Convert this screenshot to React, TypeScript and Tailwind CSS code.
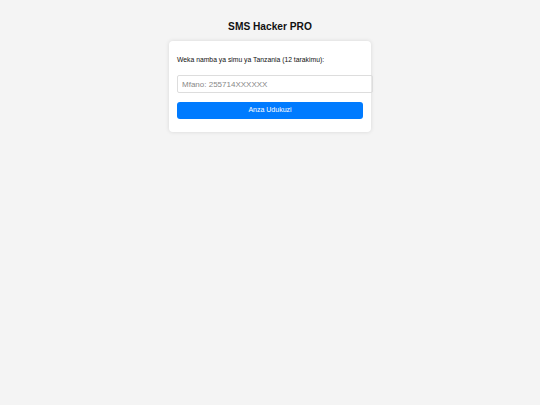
export default function App() {
  return (
    <div className="min-h-[405px] w-full bg-[#f4f4f4] pt-[20px]" style={{ fontFamily: '"Liberation Sans", Arial, sans-serif' }}>
      <h1 className="text-center text-[10.2px] font-bold leading-[14px] text-[#111]">SMS Hacker PRO</h1>
      <div className="mx-auto mt-[7px] w-[202px] rounded-[4px] bg-white p-[8px] pt-[14px] pb-[13px] shadow-[0_0_4px_rgba(0,0,0,0.12)]">
        <p className="text-[6.8px] leading-[9px] text-[#111]">Weka namba ya simu ya Tanzania (12 tarakimu):</p>
        <input
          className="mt-[11px] box-content h-[16px] w-[186px] rounded-[2px] border border-[#ddd] px-[4px] text-[8px] text-[#333] placeholder:text-[#888] outline-none"
          placeholder="Mfano: 255714XXXXXX"
        />
        <button className="mt-[8px] flex h-[17px] w-[186px] items-center justify-center rounded-[3px] bg-[#007bff] text-[7px] text-white">
          Anza Udukuzi
        </button>
      </div>
    </div>
  );
}
